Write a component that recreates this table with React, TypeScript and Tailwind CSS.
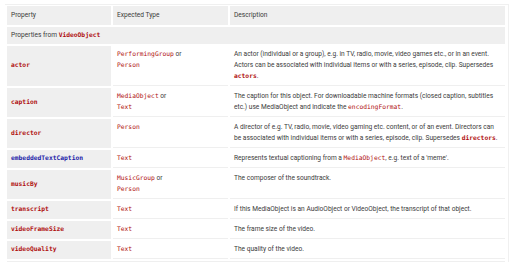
const sans = "font-['Roboto','Inter',sans-serif]"
const mono = "font-['DejaVu_Sans_Mono','Liberation_Mono',monospace]"

function Code({ children, bold = false, blue = false }: { children: React.ReactNode; bold?: boolean; blue?: boolean }) {
  return (
    <code className={`${mono} text-[6.3px] leading-none ${blue ? "text-[#1c1ca8]" : "text-[#b01010]"} ${bold ? "font-bold" : ""}`}>
      {children}
    </code>
  )
}

type Row = {
  name: string
  blue?: boolean
  types: string[]
  desc: React.ReactNode
}

const rows: Row[] = [
  {
    name: "actor",
    types: ["PerformingGroup", "Person"],
    desc: (
      <>
        An actor (individual or a group), e.g. in TV, radio, movie, video games etc., or in an event. Actors can be
        associated with individual items or with a series, episode, clip. Supersedes <Code bold>actors</Code>.
      </>
    ),
  },
  {
    name: "caption",
    types: ["MediaObject", "Text"],
    desc: (
      <>
        The caption for this object. For downloadable machine formats (closed caption, subtitles etc.) use MediaObject
        and indicate the <Code>encodingFormat</Code>.
      </>
    ),
  },
  {
    name: "director",
    types: ["Person"],
    desc: (
      <>
        A director of e.g. TV, radio, movie, video gaming etc. content, or of an event. Directors can be associated with
        individual items or with a series, episode, clip. Supersedes <Code bold>directors</Code>.
      </>
    ),
  },
  {
    name: "embeddedTextCaption",
    blue: true,
    types: ["Text"],
    desc: (
      <>
        Represents textual captioning from a <Code>MediaObject</Code>, e.g. text of a 'meme'.
      </>
    ),
  },
  {
    name: "musicBy",
    types: ["MusicGroup", "Person"],
    desc: <>The composer of the soundtrack.</>,
  },
  {
    name: "transcript",
    types: ["Text"],
    desc: <>If this MediaObject is an AudioObject or VideoObject, the transcript of that object.</>,
  },
  {
    name: "videoFrameSize",
    types: ["Text"],
    desc: <>The frame size of the video.</>,
  },
  {
    name: "videoQuality",
    types: ["Text"],
    desc: <>The quality of the video.</>,
  },
]

export default function App() {
  return (
    <div className={`w-[512px] h-[262px] overflow-hidden bg-white ${sans} text-[6.6px] leading-[11px] text-[#3a3a3a]`}>
      <div className="ml-[5px] mt-[4px] w-[504px] border-t border-r border-[#f0f0f0]">
        <table className="table-fixed border-separate border-spacing-[2px] w-[502px] -mt-px">
          <colgroup>
            <col className="w-[104px]" />
            <col className="w-[115px]" />
            <col />
          </colgroup>
          <thead>
            <tr>
              <th className="bg-[#efefef] text-left font-normal px-[4px] py-[4px]">Property</th>
              <th className="bg-[#efefef] text-left font-normal px-[4px] py-[4px]">Expected Type</th>
              <th className="bg-[#efefef] text-left font-normal px-[4px] py-[4px]">Description</th>
            </tr>
          </thead>
          <tbody>
            <tr>
              <td colSpan={3} className="bg-[#efefef] px-[4px] py-[3px]">
                Properties from <Code bold>VideoObject</Code>
              </td>
            </tr>
            {rows.map((r) => (
              <tr key={r.name}>
                <td className="bg-[#efefef] px-[4px] py-[3px] align-middle border-b border-[#efefef]">
                  <Code bold blue={r.blue}>
                    {r.name}
                  </Code>
                </td>
                <td className="px-[4px] py-[3px] align-top border-b border-[#efefef]">
                  {r.types.map((t, i) => (
                    <div key={t}>
                      <Code>{t}</Code>
                      {i < r.types.length - 1 && " or"}
                    </div>
                  ))}
                </td>
                <td className="px-[4px] py-[3px] align-top border-b border-[#efefef]">{r.desc}</td>
              </tr>
            ))}
            <tr>
              <td colSpan={3} className="bg-[#efefef] px-[4px] py-[3px]">
                Properties from <Code bold>MediaObject</Code>
              </td>
            </tr>
          </tbody>
        </table>
      </div>
    </div>
  )
}
